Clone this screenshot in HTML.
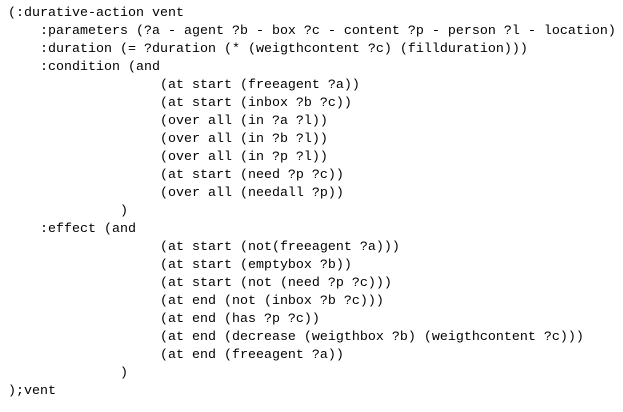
<!DOCTYPE html>
<html><head><style>
body{margin:0;background:#fff;width:623px;height:412px;overflow:hidden}
pre{margin:0;padding:5px 0 0 8px;font-family:"Liberation Mono",monospace;font-size:13.33px;line-height:18px;color:#000}
</style></head><body><pre>(:durative-action vent
    :parameters (?a - agent ?b - box ?c - content ?p - person ?l - location)
    :duration (= ?duration (* (weigthcontent ?c) (fillduration)))
    :condition (and
                   (at start (freeagent ?a))
                   (at start (inbox ?b ?c))
                   (over all (in ?a ?l))
                   (over all (in ?b ?l))
                   (over all (in ?p ?l))
                   (at start (need ?p ?c))
                   (over all (needall ?p))
              )
    :effect (and
                   (at start (not(freeagent ?a)))
                   (at start (emptybox ?b))
                   (at start (not (need ?p ?c)))
                   (at end (not (inbox ?b ?c)))
                   (at end (has ?p ?c))
                   (at end (decrease (weigthbox ?b) (weigthcontent ?c)))
                   (at end (freeagent ?a))
              )
);vent</pre></body></html>
